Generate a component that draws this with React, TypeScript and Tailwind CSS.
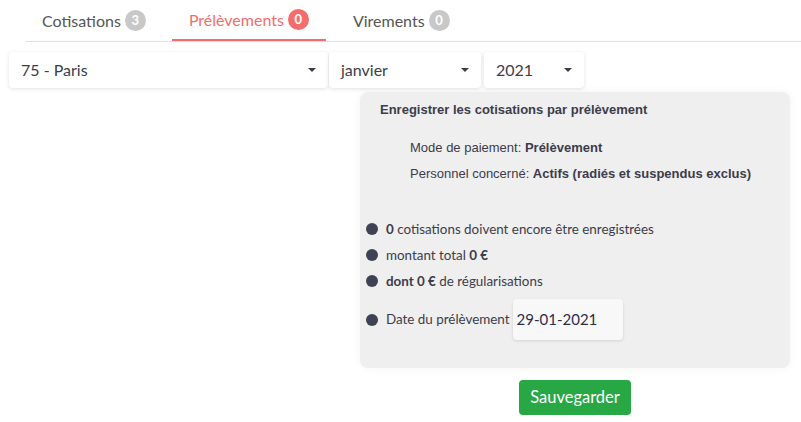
import React from "react";

const Caret = () => (
  <svg width="10" height="6" viewBox="0 0 10 6" className="shrink-0">
    <path d="M1 1 L9 1 L5 5 Z" fill="#3c3c4a" />
  </svg>
);

const Select = ({ label, w }: { label: string; w: string }) => (
  <div
    className={`${w} h-[36px] flex items-center justify-between pl-3 pr-[11px] bg-white rounded-[4px] shadow-[0_1px_4px_rgba(0,0,0,0.12)] text-[16px] text-[#3c3c4a]`}
  >
    <span>{label}</span>
    <Caret />
  </div>
);

const Badge = ({ n, red }: { n: number; red?: boolean }) => (
  <span
    className={`w-[21px] h-[21px] rounded-full flex items-center justify-center text-white text-[13px] font-bold leading-none ${
      red ? "bg-[#f56c6c]" : "bg-[#c8c8c8]"
    }`}
  >
    {n}
  </span>
);

const Bullet = () => <span className="w-[12px] h-[12px] rounded-full bg-[#3f4254] shrink-0" />;

export default function App() {
  return (
    <div
      className="w-[801px] h-[422px] bg-white overflow-hidden"
      style={{ fontFamily: "Lato, 'Noto Sans', sans-serif" }}
    >
      <div className="ml-[26px] h-[42px] flex gap-[10px] border-b border-[#dee2e6]">
        <div className="flex items-center gap-[4px] px-[16px] h-full text-[16px] text-[#555]">
          <span>Cotisations</span>
          <Badge n={3} />
        </div>
        <div className="flex items-center gap-[4px] px-[17px] h-full text-[16px] text-[#f56c6c] border-b-2 border-[#f56c6c] -mb-px">
          <span>Prélèvements</span>
          <Badge n={0} red />
        </div>
        <div className="flex items-center gap-[4px] px-[17px] h-full text-[16px] text-[#555]">
          <span>Virements</span>
          <Badge n={0} />
        </div>
      </div>

      <div className="flex mt-[10px] ml-[9px]">
        <Select label="75 - Paris" w="w-[319px]" />
        <div className="w-[1px]" />
        <Select label="janvier" w="w-[152px]" />
        <div className="w-[3px]" />
        <Select label="2021" w="w-[100px]" />
      </div>

      <div className="ml-[360px] mt-[4px] w-[430px] h-[276px] bg-[#efefef] rounded-[8px] shadow-[0_0_10px_rgba(0,0,0,0.05)] flex flex-col">
        <div
          className="pl-5 pt-[10px] text-[13px] leading-[15px] font-bold text-[#3c3c4a]"
          style={{ fontFamily: "'Liberation Sans', Arial, sans-serif" }}
        >
          Enregistrer les cotisations par prélèvement
        </div>
        <div
          className="pl-[50px] mt-[23px] flex flex-col gap-[11px] text-[13px] leading-[15px] text-[#3c3c4a]"
          style={{ fontFamily: "'Liberation Sans', Arial, sans-serif" }}
        >
          <div>
            Mode de paiement: <b>Prélèvement</b>
          </div>
          <div>
            Personnel concerné: <b>Actifs (radiés et suspendus exclus)</b>
          </div>
        </div>
        <div className="pl-[6px] mt-[35px] flex flex-col text-[13.4px] text-[#3c3c4a]">
          <div className="flex items-center gap-[8px] h-[26px]">
            <Bullet />
            <span>
              <b>0</b> cotisations doivent encore être enregistrées
            </span>
          </div>
          <div className="flex items-center gap-[8px] h-[26px]">
            <Bullet />
            <span>
              montant total <b>0 €</b>
            </span>
          </div>
          <div className="flex items-center gap-[8px] h-[26px]">
            <Bullet />
            <span>
              <b>dont 0 €</b> de régularisations
            </span>
          </div>
          <div className="flex items-center gap-[8px] mt-[5px]">
            <Bullet />
            <span>Date du prélèvement</span>
            <div className="-ml-[5px] w-[110px] h-[41px] bg-[#f8f8f8] rounded-[4px] shadow-[0_1px_3px_rgba(0,0,0,0.12)] flex items-center pl-[4px] text-[15px] text-[#2c2c4a]">
              29-01-2021
            </div>
          </div>
        </div>
      </div>

      <div className="ml-[519px] mt-[12px] w-[112px] h-[35px] bg-[#28a745] rounded-[4px] flex items-center justify-center text-white text-[16.5px]">
        Sauvegarder
      </div>
    </div>
  );
}
